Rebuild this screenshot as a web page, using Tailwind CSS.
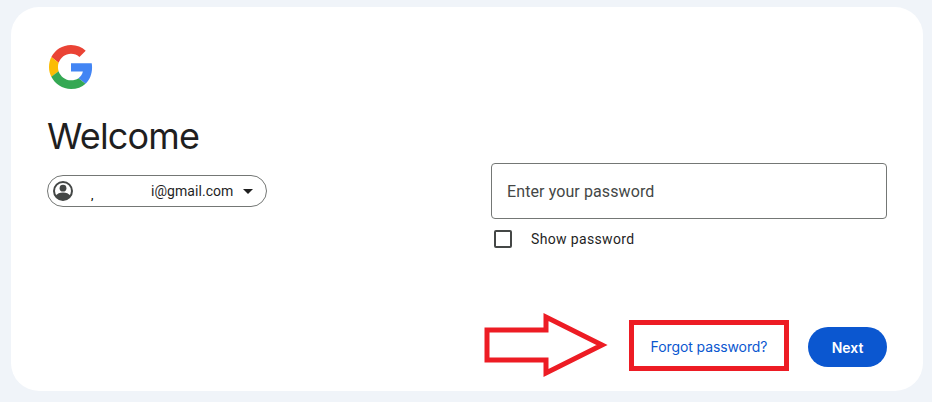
<!DOCTYPE html>
<html lang="en">
<head>
  <meta charset="UTF-8" />
  <meta name="viewport" content="width=device-width, initial-scale=1" />
  <title>Sign in - Google Accounts</title>
  <script src="https://cdn.jsdelivr.net/npm/@tailwindcss/browser@4"></script>
</head>
<body class="h-[402px] w-[932px] overflow-hidden bg-[#f0f4f9] pt-[7px] pl-[11px] font-['Roboto',sans-serif] text-[#1f1f1f]">

  <!-- Card -->
  <main class="flex h-[384px] w-[912px] flex-col rounded-[28px] bg-white pt-[38px] pr-[36px] pb-[10px] pl-[36px]">
    <div class="flex flex-1">

      <!-- Left column -->
      <section class="w-[444px]">
        <svg class="ml-[2px] block h-[44px] w-[44px]" viewBox="0 0 48 48">
          <path fill="#EA4335" d="M24 9.5c3.54 0 6.71 1.22 9.21 3.6l6.85-6.85C35.9 2.38 30.47 0 24 0 14.62 0 6.51 5.38 2.56 13.22l7.98 6.19C12.43 13.72 17.74 9.5 24 9.5z"/>
          <path fill="#4285F4" d="M46.98 24.55c0-1.57-.15-3.09-.38-4.55H24v9.02h12.94c-.58 2.96-2.26 5.48-4.78 7.18l7.73 6c4.51-4.18 7.09-10.36 7.09-17.65z"/>
          <path fill="#FBBC05" d="M10.53 28.59c-.48-1.45-.76-2.99-.76-4.59s.27-3.14.76-4.59l-7.98-6.19C.92 16.46 0 20.12 0 24c0 3.88.92 7.54 2.56 10.78l7.97-6.19z"/>
          <path fill="#34A853" d="M24 48c6.48 0 11.93-2.13 15.89-5.81l-7.73-6c-2.15 1.45-4.92 2.3-8.16 2.3-6.26 0-11.57-4.22-13.47-9.91l-7.98 6.19C6.51 42.62 14.62 48 24 48z"/>
        </svg>
        <h1 class="mt-[25px] text-[36px] leading-[44px] font-normal font-['Inter',sans-serif] tracking-[-0.85px]">Welcome</h1>

        <!-- Account chip -->
        <button class="mt-[17px] flex h-[32px] w-[220px] items-center rounded-full border border-[#747775] pl-[4px] text-[14px]">
          <svg class="h-[22px] w-[22px] shrink-0" viewBox="0 0 22 22">
            <circle cx="11" cy="11" r="9" fill="none" stroke="#444746" stroke-width="2"/>
            <circle cx="11" cy="8.2" r="3.4" fill="#444746"/>
            <path fill="#444746" d="M3.6 15.8c1.4-2.2 4.4-3.4 7.4-3.4s6 1.2 7.4 3.4c-1.6 2.4-4.3 4.2-7.4 4.2s-5.8-1.8-7.4-4.2z"/>
          </svg>
          <span class="ml-[17px] w-[60px] shrink-0 translate-y-[4px] text-left text-[10px] font-bold text-black">,</span>
          <span class="tracking-[0.05px]">i@gmail.com</span>
          <svg class="ml-[10px] h-[5px] w-[10px]" viewBox="0 0 10 5"><path fill="#1f1f1f" d="M0 0h10L5 5z"/></svg>
        </button>
      </section>

      <!-- Right column -->
      <section class="w-[396px] pt-[118px]">
        <div class="flex h-[56px] items-center rounded-[4px] border border-[#747775] px-[15px] pt-[1px] text-[16px] tracking-[0.1px] text-[#444746]">Enter your password</div>
        <label class="mt-[10px] flex items-center text-[14px] tracking-[0.35px]">
          <span class="ml-[3px] h-[18px] w-[18px] -translate-y-px rounded-[2px] border-2 border-[#444746]"></span>
          <span class="ml-[19px]">Show password</span>
        </label>
      </section>
    </div>

    <!-- Actions -->
    <div class="flex items-center justify-end">
      <svg class="mr-[19px] block h-[72px] w-[126px]" viewBox="0 0 126 72">
        <path fill="none" stroke="#ed1c24" stroke-width="5" stroke-linejoin="miter" d="M3 21H62V8L118 36L62 64V51H3z"/>
      </svg>
      <a href="#" class="flex h-[51px] w-[160px] items-center justify-center border-[5px] border-[#ed1c24] pt-[2px] font-['Inter',sans-serif] text-[14px] tracking-[-0.1px] font-normal text-[#0b57d0]">Forgot password?</a>
      <button class="mt-[4px] ml-[19px] h-[40px] w-[79px] rounded-full bg-[#0b57d0] font-['Inter',sans-serif] text-[14px] font-semibold text-white">Next</button>
    </div>
  </main>

</body>
</html>
